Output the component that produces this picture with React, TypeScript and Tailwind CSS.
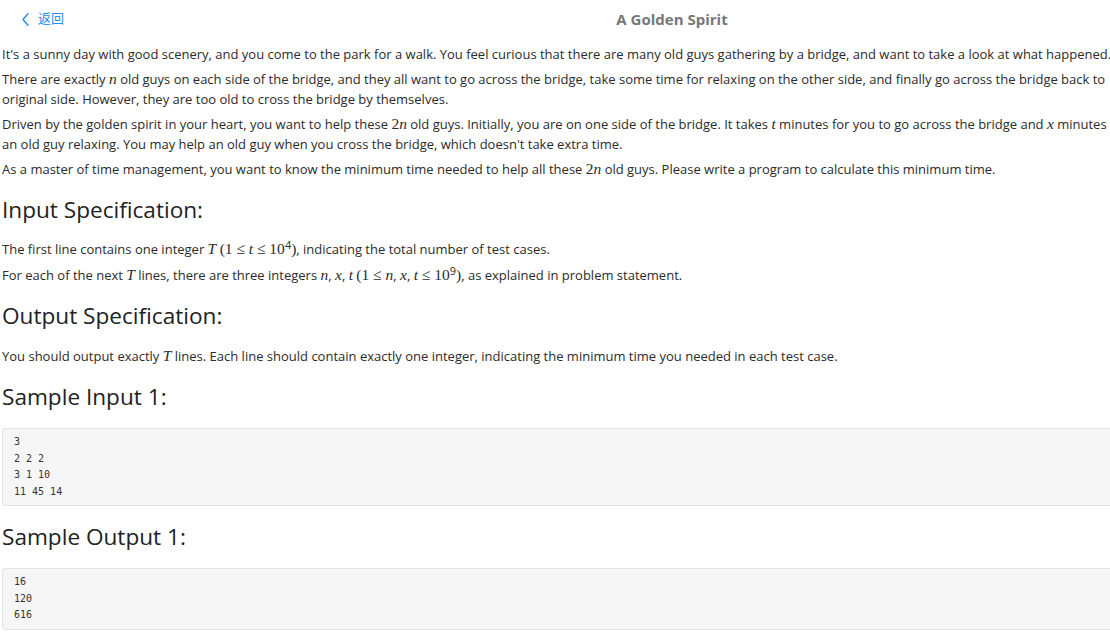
import React from 'react';

// Problem statement page: a back link, a centred title, then the statement
// sections. The content is wider than the window, so the right edge is cut.

const body = "font-['Open_Sans',sans-serif] text-[13px] leading-[20px] text-[#2b2b2b]";
const heading = "font-['Open_Sans',sans-serif] text-[22.6px] leading-[36px] text-[#222]";
const code =
  "rounded-[3px] border border-[#e3e3e3] bg-[#f6f6f6] py-[5px] pl-[11px] font-['DejaVu_Sans_Mono',monospace] text-[10px] leading-[16.5px] text-[#333]";

function I({ children }: { children: React.ReactNode }) {
  return <span className="font-['Liberation_Serif',serif] text-[15.5px] italic">{children}</span>;
}

function R({ children }: { children: React.ReactNode }) {
  return <span className="font-['Liberation_Serif',serif] text-[15.5px]">{children}</span>;
}

function Sup({ children }: { children: React.ReactNode }) {
  return <sup className="text-[11px]">{children}</sup>;
}

export default function App() {
  return (
    <div className="h-[641px] w-[1110px] overflow-hidden bg-white">
      <div className="w-[1344px]">
        {/* header */}
        <div className="grid h-[38px] grid-cols-[1fr_auto_1fr] items-center">
          <a className="flex items-center gap-[9px] pl-[22px] text-[13px] text-[#2d8cf0] font-['Open_Sans','Noto_Sans_CJK_SC',sans-serif]">
            <svg width="7" height="13" viewBox="0 0 7 13" fill="none">
              <path d="M6 0.8 L1 6.5 L6 12.2" stroke="#2d8cf0" strokeWidth="1.5" strokeLinecap="round" strokeLinejoin="round" />
            </svg>
            <span>返回</span>
          </a>
          <div className="text-[15px] font-bold text-[#777] font-['Open_Sans',sans-serif]">A Golden Spirit</div>
          <div />
        </div>

        <div className="pl-[2px]">
          <p className={`${body} mt-[6px] whitespace-nowrap`}>
            It's a sunny day with good scenery, and you come to the park for a walk. You feel curious that there are many old guys gathering by a bridge, and want to take a look at what happened.
          </p>
          <p className={`${body} mt-[5px] whitespace-nowrap`}>
            There are exactly <I>n</I> old guys on each side of the bridge, and they all want to go across the bridge, take some time for relaxing on the other side, and finally go across the bridge back to
            <br />
            original side. However, they are too old to cross the bridge by themselves.
          </p>
          <p className={`${body} mt-[5px] whitespace-nowrap`}>
            Driven by the golden spirit in your heart, you want to help these <R>2</R><I>n</I> old guys. Initially, you are on one side of the bridge. It takes <I>t</I> minutes for you to go across the bridge and <I>x</I> minutes
            <br />
            an old guy relaxing. You may help an old guy when you cross the bridge, which doesn't take extra time.
          </p>
          <p className={`${body} mt-[5px] whitespace-nowrap`}>
            As a master of time management, you want to know the minimum time needed to help all these <R>2</R><I>n</I> old guys. Please write a program to calculate this minimum time.
          </p>

          <h2 className={`${heading} mt-[13px]`}>Input Specification:</h2>
          <p className={`${body} mt-[11px] whitespace-nowrap`}>
            The first line contains one integer <I>T</I> <R>(1 ≤ </R><I>t</I><R> ≤ 10</R><Sup>4</Sup><R>)</R>, indicating the total number of test cases.
          </p>
          <p className={`${body} mt-[6px] whitespace-nowrap`}>
            For each of the next <I>T</I> lines, there are three integers <I>n</I>, <I>x</I>, <I>t</I> <R>(1 ≤ </R><I>n</I>, <I>x</I>, <I>t</I><R> ≤ 10</R><Sup>9</Sup><R>)</R>, as explained in problem statement.
          </p>

          <h2 className={`${heading} mt-[13px]`}>Output Specification:</h2>
          <p className={`${body} mt-[12px] whitespace-nowrap`}>
            You should output exactly <I>T</I> lines. Each line should contain exactly one integer, indicating the minimum time you needed in each test case.
          </p>

          <h2 className={`${heading} mt-[13px]`}>Sample Input 1:</h2>
          <pre className={`${code} mt-[13px]`}>{`3
2 2 2
3 1 10
11 45 14`}</pre>

          <h2 className={`${heading} mt-[13px]`}>Sample Output 1:</h2>
          <pre className={`${code} mt-[13px] leading-[16.67px]`}>{`16
120
616`}</pre>
        </div>
      </div>
    </div>
  );
}
